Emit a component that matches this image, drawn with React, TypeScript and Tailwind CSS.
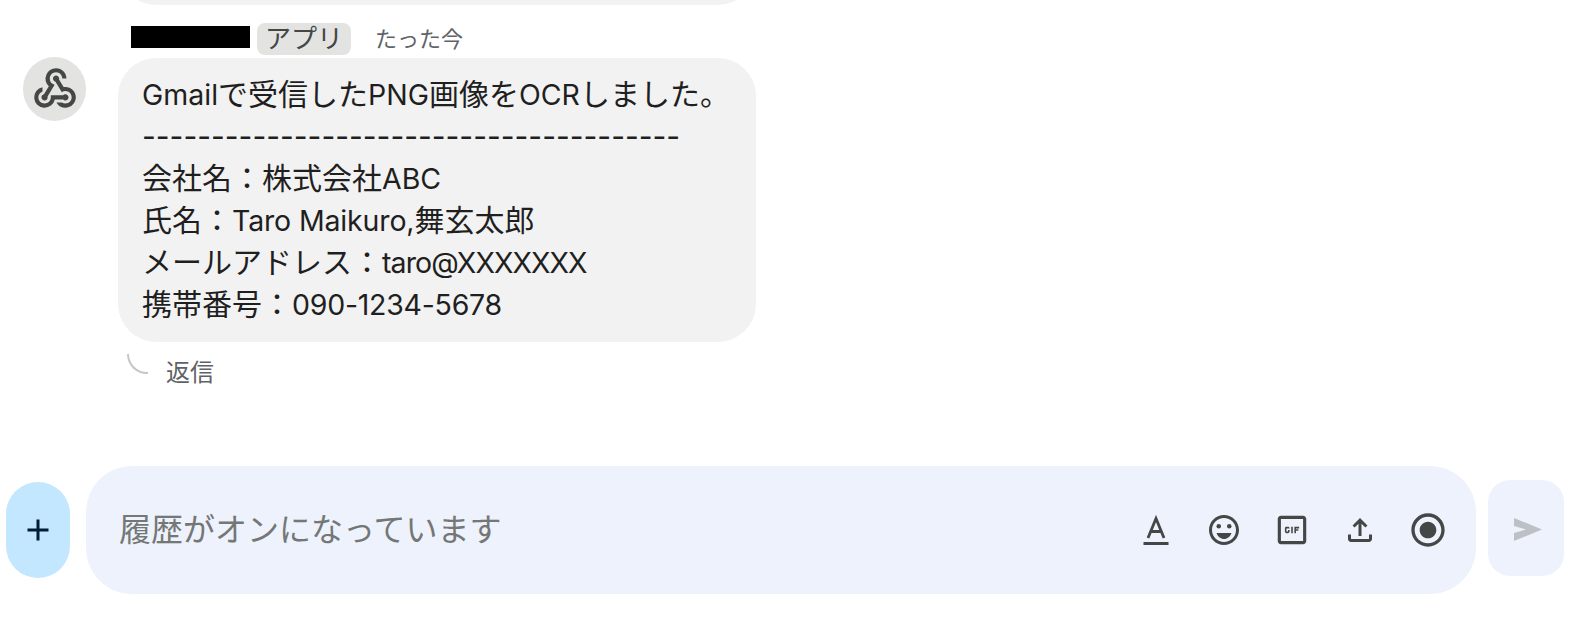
import React from "react";
import {
  MdAdd,
  MdOutlineEmojiEmotions,
  MdOutlineFileUpload,
  MdOutlineGifBox,
  MdRadioButtonChecked,
  MdWebhook,
} from "react-icons/md";

const font = "font-['Inter','Noto_Sans_CJK_JP',sans-serif]";

const Latin = ({ children, className = "" }: { children: React.ReactNode; className?: string }) => (
  <span className={`text-[28.5px] leading-none ${className}`}>{children}</span>
);

const TextFormatIcon = () => (
  <svg viewBox="0 0 28 30" className="w-7 h-[30px]" fill="none" stroke="#444746">
    <path d="M6 23 L14 3.5 L22 23 M9 16.5 H19" strokeWidth="2.8" />
    <path d="M1.5 28.5 H26.5" strokeWidth="3" />
  </svg>
);

const SendIcon = () => (
  <svg viewBox="0 0 28 23" className="w-7 h-[23px] ml-[3px] mt-[2px]" fill="#bdc1c6">
    <polygon points="0,0 28,11.5 0,23 0,15 12,11.5 0,8" />
  </svg>
);

const ToolButton = ({ children }: { children: React.ReactNode }) => (
  <div className="w-[68px] h-10 flex items-center justify-center text-[#444746]">
    {children}
  </div>
);

export default function App() {
  return (
    <div className={`w-[1582px] h-[618px] bg-white overflow-hidden flex flex-col ${font}`}>
      {/* tail of the previous message */}
      <div className="ml-[118px] w-[638px] h-[5px] overflow-hidden flex items-end">
        <div className="w-full h-[76px] shrink-0 rounded-[38px] bg-[#f2f2f2]" />
      </div>

      <div className="flex items-center ml-[131px] mt-[18px] h-8">
        <div className="w-[119px] h-[22px] mb-1 bg-black" />
        <span className="ml-[7px] h-8 w-[94px] rounded-lg bg-[#e3e3e1] text-[#444746] text-[26px] leading-8 text-center">
          アプリ
        </span>
        <span className="ml-6 text-[22px] text-[#5f6368]">たった今</span>
      </div>

      <div className="flex mt-[3px]">
        <div className="ml-[23px] -mt-px w-[63px] h-[64px] rounded-full bg-[#e3e3e1] flex items-center justify-center text-[#444746]">
          <MdWebhook size={50} />
        </div>
        <div className="ml-8 w-[638px] h-[284px] rounded-[38px] bg-[#f2f2f2] pl-6 pt-[15px] text-[30px] leading-[42px] text-[#1f1f1f] whitespace-nowrap">
          <div>
            <Latin>Gmail</Latin>で受信した<Latin>PNG</Latin>画像を<Latin>OCR</Latin>しました。
          </div>
          <div>---------------------------------------</div>
          <div>
            会社名：株式会社<Latin>ABC</Latin>
          </div>
          <div>
            氏名：<Latin className="tracking-[-0.15px]">Taro Maikuro,</Latin>舞玄太郎
          </div>
          <div>
            メールアドレス：<Latin className="tracking-[-0.9px]">taro@XXXXXXX</Latin>
          </div>
          <div>
            携帯番号：<Latin className="tracking-[-0.25px]">090-1234-5678</Latin>
          </div>
        </div>
      </div>

      <div className="flex items-start ml-[127px] mt-3 h-[40px]">
        <div className="w-[21px] h-5 border-l-2 border-b-2 border-[#c4c7c5] rounded-bl-[20px]" />
        <span className="ml-[18px] mt-[3px] text-2xl leading-8 text-[#5f6368]">返信</span>
      </div>

      <div className="flex items-center ml-[6px] mt-[72px]">
        <div className="w-16 h-24 rounded-[32px] bg-[#c2e7ff] flex items-center justify-center text-[#001d35]">
          <MdAdd size={36} />
        </div>
        <div className="ml-4 w-[1390px] h-[128px] rounded-[46px] bg-[#edf2fc] flex items-center pl-[33px] pr-[14px]">
          <span className="flex-1 text-[32px] text-[#747775]">履歴がオンになっています</span>
          <ToolButton>
            <TextFormatIcon />
          </ToolButton>
          <ToolButton>
            <MdOutlineEmojiEmotions size={36} />
          </ToolButton>
          <ToolButton>
            <MdOutlineGifBox size={38} />
          </ToolButton>
          <ToolButton>
            <MdOutlineFileUpload size={36} />
          </ToolButton>
          <ToolButton>
            <MdRadioButtonChecked size={40} />
          </ToolButton>
        </div>
        <div className="ml-3 mb-1 w-[76px] h-24 rounded-[22px] bg-[#eef2fc] flex items-center justify-center">
          <SendIcon />
        </div>
      </div>
    </div>
  );
}
